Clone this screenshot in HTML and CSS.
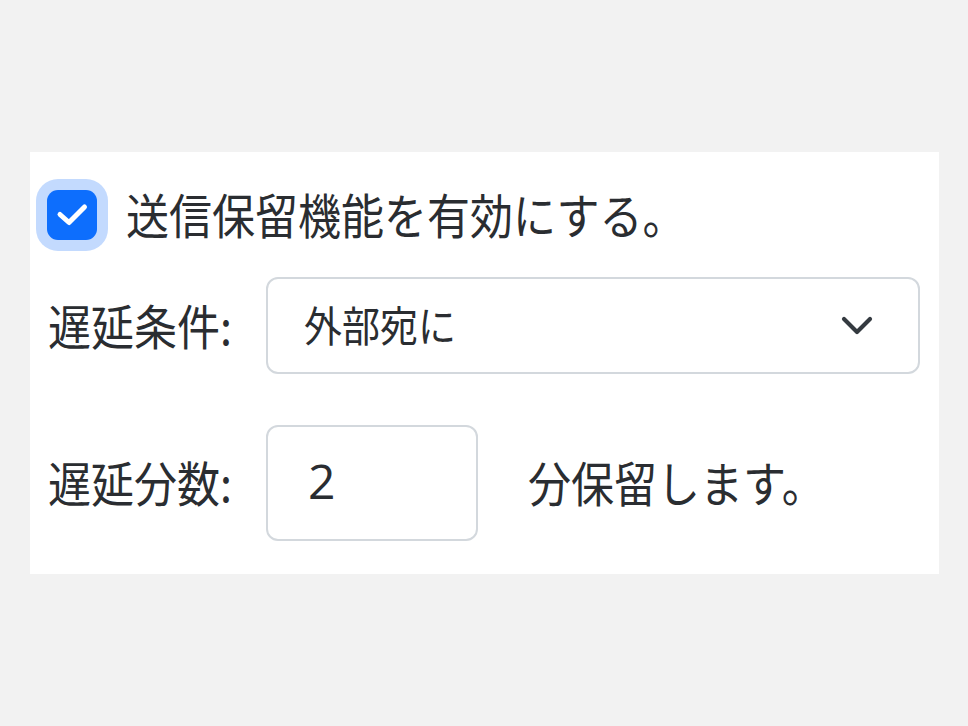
FILE: index.html
```html
<!DOCTYPE html>
<html lang="ja">
<head>
<meta charset="utf-8">
<link rel="stylesheet" href="styles.css">
</head>
<body>
<div class="panel">
  <label class="check-row">
    <span class="checkbox">
      <svg viewBox="0 0 50 50" width="50" height="50"><path d="M13 24.5 L22 32.5 L37.5 17" fill="none" stroke="#fff" stroke-width="5" stroke-linecap="round" stroke-linejoin="round"/></svg>
    </span>
    <span class="txt">送信保留機能を有効にする。</span>
  </label>
  <div class="row row-select">
    <span class="label txt">遅延条件:</span>
    <div class="select">
      <span class="txt sel-txt">外部宛に</span>
      <svg class="chev" viewBox="0 0 32 20" width="32" height="20"><path d="M3 3 L16 16 L29 3" fill="none" stroke="#343a40" stroke-width="4.2" stroke-linecap="round" stroke-linejoin="round"/></svg>
    </div>
  </div>
  <div class="row row-num">
    <span class="label txt">遅延分数:</span>
    <div class="num"><span class="digit">2</span></div>
    <span class="txt suffix">分保留します。</span>
  </div>
</div>
</body>
</html>
```
FILE: styles.css
```css
html, body {
  margin: 0;
  padding: 0;
  background: #f2f2f2;
}
body {
  padding: 152px 0 0 30px;
  font-family: "Noto Sans CJK JP", "Noto Sans", sans-serif;
  color: #2a2d31;
}
.panel {
  width: 909px;
  height: 422px;
  box-sizing: border-box;
  background: #fff;
  padding: 38px 0 0 17px;
}
.txt {
  font-size: 43px;
  line-height: 50px;
  display: inline-block;
  transform: translateY(-2px) scaleY(1.12);
}
.check-row {
  display: flex;
  align-items: center;
  height: 50px;
}
.checkbox {
  width: 50px;
  height: 50px;
  border-radius: 11px;
  background: #0d6efd;
  box-shadow: 0 0 0 11px #c3dafe;
  display: flex;
  flex: none;
  margin-right: 29px;
}
.row {
  display: flex;
  align-items: center;
}
.row-select {
  margin-top: 37px;
}
.label {
  width: 219px;
  flex: none;
  padding-left: 1px;
  box-sizing: border-box;
}
.select {
  width: 654px;
  height: 97px;
  box-sizing: border-box;
  border: 2px solid #d3d8dd;
  border-radius: 12px;
  display: flex;
  align-items: center;
  justify-content: space-between;
  padding: 0 45px 0 36px;
}
.sel-txt {
  font-size: 38px;
}
.row-num {
  margin-top: 51px;
}
.num {
  width: 212px;
  height: 116px;
  box-sizing: border-box;
  border: 2px solid #d3d8dd;
  border-radius: 12px;
  display: flex;
  align-items: center;
  padding-left: 40px;
  flex: none;
}
.digit {
  font-family: "Open Sans", "Noto Sans", sans-serif;
  font-size: 48px;
  line-height: 50px;
  color: #2a2d31;
  transform: translateY(-2px);
}
.suffix {
  margin-left: 50px;
}
```
